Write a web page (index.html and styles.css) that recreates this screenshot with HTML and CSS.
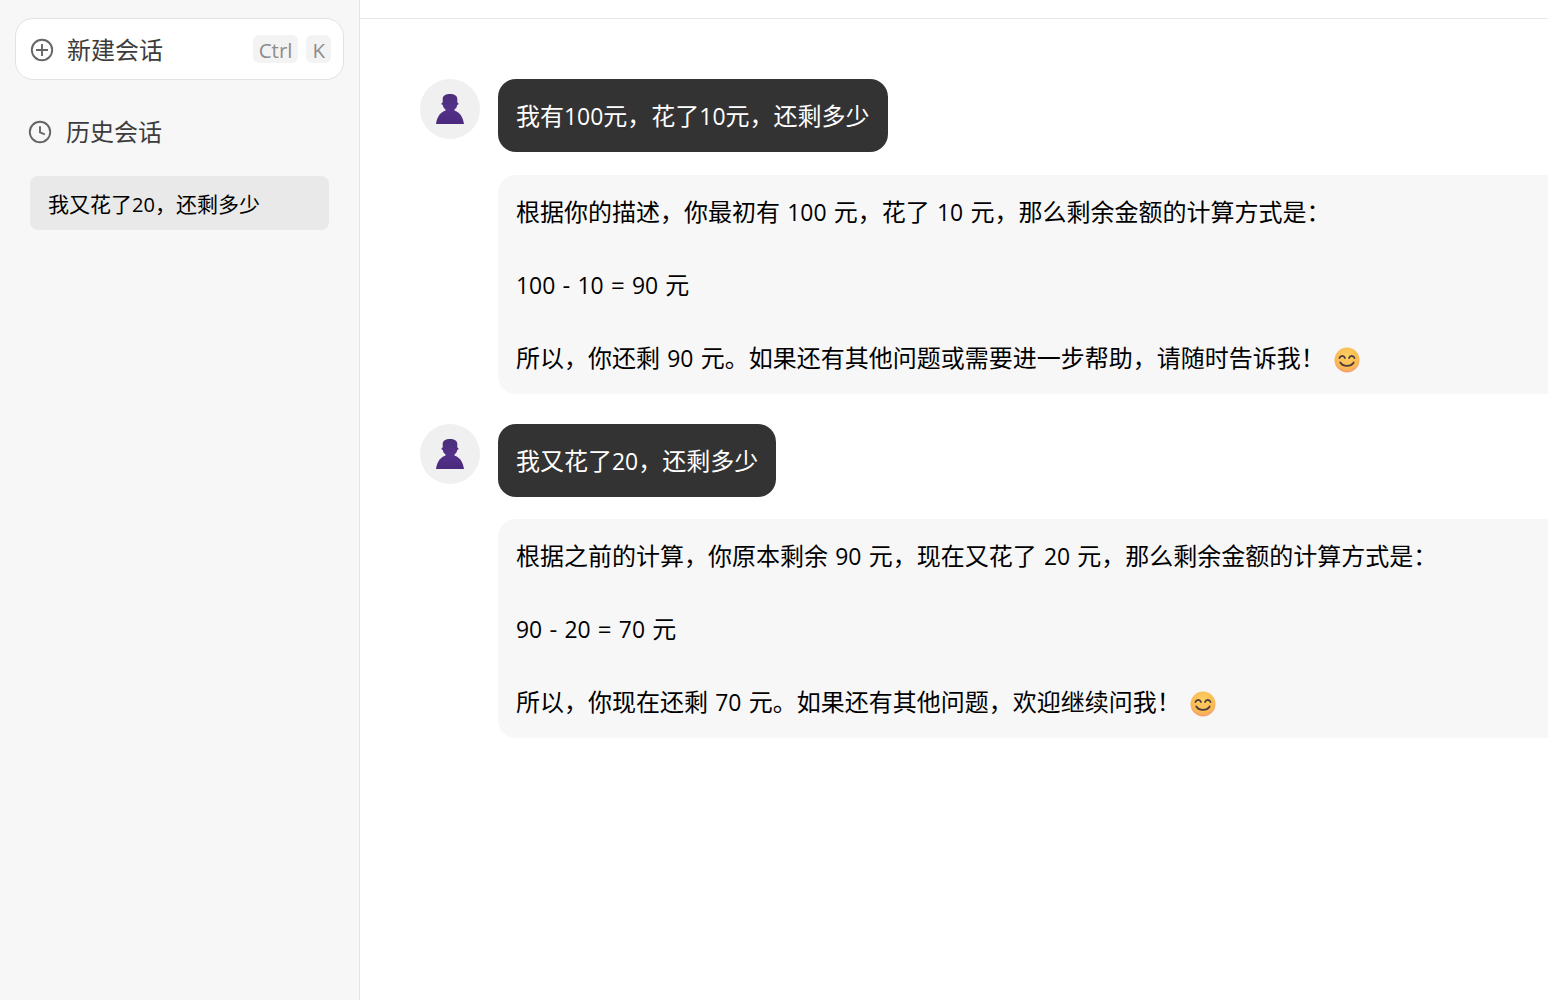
FILE: index.html
```html
<!DOCTYPE html>
<html lang="zh-CN">
<head>
<meta charset="utf-8">
<title>会话</title>
<link rel="stylesheet" href="styles.css">
</head>
<body>
<div class="app">
  <aside class="sidebar">
    <div class="new-chat">
      <svg class="icon-plus" viewBox="0 0 24 24"><circle cx="12" cy="12" r="10.2"/><path d="M12 6v12M6 12h12"/></svg>
      <span class="new-label">新建会话</span>
      <span class="keys"><span class="key">Ctrl</span><span class="key">K</span></span>
    </div>
    <div class="history-head">
      <svg class="icon-clock" viewBox="0 0 24 24"><circle cx="12" cy="12" r="10.2"/><path d="M12 6.200v6.200l4.800 2"/></svg>
      <span class="history-label">历史会话</span>
    </div>
    <div class="history-item">我又花了<span class="n">20</span>，还剩多少</div>
  </aside>
  <main class="main">
    <div class="topbar"></div>
    <div class="thread">
      <div class="turn">
        <div class="avatar"><svg viewBox="0 0 28 30"><use href="#person"/></svg></div>
        <div class="bubble user">我有<span class="n">100</span>元，花了<span class="n">10</span>元，还剩多少</div>
      </div>
      <div class="bubble bot">
        <p>根据你的描述，你最初有 <span class="n">100</span> 元，花了 <span class="n">10</span> 元，那么剩余金额的计算方式是：</p>
        <p class="blank">&nbsp;</p>
        <p><span class="n">100</span> - <span class="n">10</span> = <span class="n">90</span> 元</p>
        <p class="blank">&nbsp;</p>
        <p>所以，你还剩 <span class="n">90</span> 元。如果还有其他问题或需要进一步帮助，请随时告诉我！<svg class="emoji" viewBox="0 0 26 26"><use href="#smile"/></svg></p>
      </div>
      <div class="turn second">
        <div class="avatar"><svg viewBox="0 0 28 30"><use href="#person"/></svg></div>
        <div class="bubble user">我又花了<span class="n">20</span>，还剩多少</div>
      </div>
      <div class="bubble bot tight">
        <p>根据之前的计算，你原本剩余 <span class="n">90</span> 元，现在又花了 <span class="n">20</span> 元，那么剩余金额的计算方式是：</p>
        <p class="blank">&nbsp;</p>
        <p><span class="n">90</span> - <span class="n">20</span> = <span class="n">70</span> 元</p>
        <p class="blank">&nbsp;</p>
        <p>所以，你现在还剩 <span class="n">70</span> 元。如果还有其他问题，欢迎继续问我！<svg class="emoji" viewBox="0 0 26 26"><use href="#smile"/></svg></p>
      </div>
    </div>
  </main>
</div>
<svg class="defs" width="0" height="0">
  <defs>
    <linearGradient id="pg" x1="0" y1="0" x2="0" y2="1"><stop offset="0" stop-color="#4b2f7a"/><stop offset="0.5" stop-color="#54308a"/><stop offset="1" stop-color="#4a2a7c"/></linearGradient>
    <radialGradient id="sg" cx="0.5" cy="0.35" r="0.7"><stop offset="0" stop-color="#fdd160"/><stop offset="0.7" stop-color="#f9b855"/><stop offset="1" stop-color="#f2937a"/></radialGradient>
    <g id="person">
      <path fill="url(#pg)" d="M6.700 5C6.700 1.600 9.700 0 14 0s7.300 1.600 7.300 5v3.500c.8.100 1.200.6 1.200 1.200s-.4 1.100-1.300 1.200c-.3 2.200-1.200 3.500-2.600 4.300v1.500c4.600 1.200 8.200 5.300 9.400 13.300H0C1.200 22 4.800 17.900 9.400 16.700v-1.500C8 14.400 7.100 13.100 6.800 10.900 5.900 10.800 5.500 10.300 5.500 9.700s.4-1.100 1.200-1.200z"/>
    </g>
    <g id="smile">
      <circle cx="13" cy="13" r="12.500" fill="url(#sg)"/>
      <path d="M5.500 11c1-2.800 4.500-2.800 5.500 0M15 11c1-2.800 4.500-2.800 5.500 0M6.300 15.400c3 4.600 10.400 4.600 13.400 0" fill="none" stroke="#4a3a3a" stroke-width="1.800" stroke-linecap="round"/>
    </g>
  </defs>
</svg>
</body>
</html>
```
FILE: styles.css
```css
* { box-sizing: border-box; }
html, body { margin: 0; height: 100%; overflow: hidden; }
body {
  font-family: "Open Sans", "Noto Sans CJK SC", sans-serif;
  color: #000;
  background: #fff;
}
.app { display: flex; height: 1000px; }
.sidebar {
  width: 360px;
  flex: none;
  background: #f7f7f7;
  border-right: 1px solid #e5e5e5;
  padding: 18px 15px 0;
}
.new-chat {
  display: flex;
  align-items: center;
  height: 62px;
  background: #fff;
  border: 1px solid #e2e2e2;
  border-radius: 18px;
  padding: 0 12px 0 14px;
  color: #3c3c3c;
  font-size: 24px;
}
.icon-plus { width: 24px; height: 24px; flex: none; margin: 2px 13px 0 0; }
.icon-plus circle, .icon-clock circle, .icon-plus path, .icon-clock path {
  fill: none;
  stroke: #666;
  stroke-width: 1.9;
}
.new-label { flex: 1; line-height: 36px; padding-top: 2px; }
.keys { display: flex; gap: 8px; }
.key {
  background: #f3f3f3;
  color: #8c8c8c;
  border-radius: 6px;
  font-size: 20.5px;
  height: 28px;
  line-height: 30px;
  padding: 0 6px;
  min-width: 24px;
}
.history-head {
  display: flex;
  align-items: center;
  margin-top: 34px;
  padding-left: 13px;
  height: 36px;
  font-size: 24px;
  color: #3c3c3c;
}
.history-label { padding-bottom: 4px; }
.icon-clock { width: 24px; height: 24px; flex: none; margin-right: 14px; }
.history-item {
  margin: 26px 15px 0;
  height: 54px;
  line-height: 56px;
  background: #e9e9e9;
  border-radius: 8px;
  padding-left: 18px;
  font-size: 21px;
  color: #000;
}
.n { font-size: 0.955em; }
.main { flex: 1; min-width: 0; overflow: hidden; }
.topbar { height: 19px; border-bottom: 1px solid #e8e8e8; }
.thread { padding: 60px 0 0 60px; }
.turn { display: flex; align-items: flex-start; gap: 18px; }
.second { margin-top: 30px; }
.avatar {
  width: 60px;
  height: 60px;
  flex: none;
  border-radius: 50%;
  background: #f0f0f0;
  display: flex;
  align-items: center;
  justify-content: center;
}
.avatar svg { width: 28px; height: 30px; }
.bubble {
  font-size: 24px;
  line-height: 36px;
  padding: 19px 18px 17px;
  border-radius: 18px;
  word-spacing: 1px;
}
.user { background: #333; color: #fff; }
.bot {
  margin: 23px 0 0 78px;
  background: #f7f7f7;
  width: 1200px;
}
.tight { margin-top: 22px; }
.bot p { margin: 0; white-space: nowrap; }
.emoji { width: 26px; height: 26px; margin-left: 9px; vertical-align: -6px; }
.defs { position: absolute; }
```
